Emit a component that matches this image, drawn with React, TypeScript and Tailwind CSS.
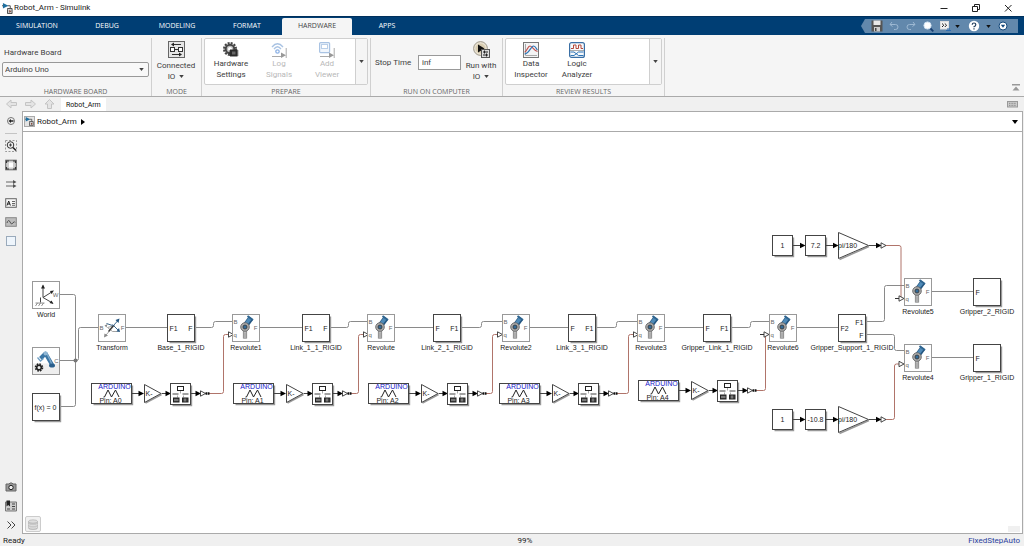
import React from 'react';
import clsx from 'clsx';

const ribbonTabs = ['SIMULATION', 'DEBUG', 'MODELING', 'FORMAT', 'HARDWARE', 'APPS'];

const Caret: React.FC<{ className?: string }> = ({ className = 'w-[5px] h-[3px]' }) => (
  <svg viewBox="0 0 6 4" className={className} aria-hidden="true">
    <path d="M0 0H6L3 4Z" fill="currentColor" />
  </svg>
);

const ModelIcon: React.FC<{ className?: string }> = ({ className }) => (
  <svg viewBox="0 0 12 12" className={className} aria-hidden="true">
    <path d="M0 3H2M6 3H9V6" stroke="#444" fill="none" />
    <path d="M1 0L7 3L1 6Z" fill="#1f6f9f" />
    <path d="M6 7V6H11V11.5H6Z" fill="#ccc" stroke="#444" />
    <path d="M8 7.500L10 9L8 10.500Z" fill="#7b3a2a" />
  </svg>
);

/* ---------- ribbon icons ---------- */

const ConnectedIcon = () => (
  <svg viewBox="0 0 17 17" className="h-[17px] w-[17px]" aria-hidden="true">
    <rect x="0.5" y="0.5" width="16" height="16" fill="#e6e6e6" stroke="#666" />
    <path d="M4 3.5H13M4 13.5H12M2 8.5H15" stroke="#333" strokeWidth="1.2" />
    <path d="M6 1.5L3 3.5L6 5.5ZM11 11.5L14 13.5L11 15.5Z" fill="#222" />
    <rect x="2.5" y="6.5" width="4" height="4" fill="#fff" stroke="#333" />
    <rect x="10.5" y="6.5" width="4" height="4" fill="#fff" stroke="#333" />
  </svg>
);

const HardwareSettingsIcon = () => (
  <svg viewBox="0 0 16 16" className="h-4 w-4" aria-hidden="true">
    <circle cx="7" cy="7" r="6" fill="none" stroke="#444" strokeWidth="2" strokeDasharray="2 1.14" />
    <circle cx="7" cy="7" r="4.3" fill="#bbb" stroke="#444" strokeWidth="2" />
    <circle cx="7" cy="7" r="2" fill="#fff" />
    <rect x="7" y="7.5" width="7.5" height="7" fill="#333" />
    <path d="M6 9H15.5M6 11H15.5M6 13H15.5" stroke="#222" strokeWidth="0.8" />
    <path d="M9 9.5H12.5V12.5H9Z" fill="#666" />
  </svg>
);

const LogSignalsIcon = () => (
  <svg viewBox="0 0 16 16" className="h-4 w-4" fill="none" aria-hidden="true">
    <path d="M1 5Q6.500 -1.500 12 5M3 7Q6.500 2.500 10 7" stroke="#a9c3e3" strokeWidth="1.3" />
    <circle cx="6.500" cy="9.500" r="1.700" stroke="#8db2e6" strokeWidth="1.300" />
    <path d="M1 14.500H11M15.200 6V16" stroke="#aaa" />
    <path d="M10 10.500L15 13.300L10 16Z" fill="#999" />
  </svg>
);

const AddViewerIcon = () => (
  <svg viewBox="0 0 16 16" className="h-4 w-4" fill="none" aria-hidden="true">
    <rect x="0.600" y="0.600" width="10" height="10" rx="1" stroke="#a9c3e3" strokeWidth="1.200" fill="#f1f6fc" />
    <rect x="2.500" y="2.500" width="6" height="4" stroke="#b9cfe9" fill="#fff" />
    <path d="M1 14.500H11M15.200 6V16" stroke="#aaa" />
    <path d="M10 10.500L15 13.300L10 16Z" fill="#999" />
  </svg>
);

const RunIcon = () => (
  <svg viewBox="0 0 17 17" className="h-[17px] w-[17px]" aria-hidden="true">
    <circle cx="7.500" cy="7.500" r="6.900" fill="#e9e2d2" stroke="#a09a8c" />
    <circle cx="7.500" cy="7.500" r="5" fill="#d8ccb0" />
    <path d="M5 3.500L11.500 7.500L5 11.500Z" fill="#111" />
    <rect x="8.500" y="8.500" width="8" height="8" fill="#ddd" stroke="#555" />
    <path d="M10 11H15M10 14H15" stroke="#222" />
    <path d="M11.500 9.500V12.500M13.500 12.500V15.500" stroke="#222" />
  </svg>
);

const DataInspectorIcon = () => (
  <svg viewBox="0 0 16 16" className="h-4 w-4" fill="none" aria-hidden="true">
    <rect x="0.500" y="0.500" width="15" height="15" fill="#f4f4f4" stroke="#777" />
    <path d="M2.500 2V13.500H14" stroke="#aaa" />
    <path d="M1.500 10C4 10 4.500 4 7 4S11 9 14.500 9.500" stroke="#c0504d" strokeWidth="1.200" />
    <path d="M1.500 12C6 12 8 4 10.500 4S13 7 14.500 8" stroke="#2e75b6" strokeWidth="1.200" />
  </svg>
);

const LogicAnalyzerIcon = () => (
  <svg viewBox="0 0 16 16" className="h-4 w-4" fill="none" aria-hidden="true">
    <rect x="0.600" y="0.600" width="14.800" height="14.800" rx="2" fill="#f7f9fb" stroke="#3a6fa5" strokeWidth="1.200" />
    <path d="M2 6.500H4.500V3H7V6.500H9.500V3H12V6.500H14" stroke="#b5483a" />
    <path d="M1 8.500H15" stroke="#777" strokeWidth="0.600" />
    <path d="M1.500 10H5L9.500 13.500H14.500M1.500 13.500H5L9.500 10H14.500" stroke="#2e75b6" />
  </svg>
);

/* ---------- ribbon pieces ---------- */

interface RibbonButtonProps {
  icon: React.ReactNode;
  lines: [string, string];
  disabled?: boolean;
  menu?: boolean;
  className?: string;
}

const RibbonButton: React.FC<RibbonButtonProps> = ({ icon, lines, disabled, menu, className = 'w-12' }) => (
  <button
    type="button"
    disabled={disabled}
    className={clsx('flex flex-col items-center text-[8px] leading-[11px]', disabled ? 'text-[#b8b8b8]' : 'text-[#404040]', className)}
  >
    {icon}
    <span className={menu ? 'mt-[2px]' : ''}>{lines[0]}</span>
    <span className="flex items-center gap-1">
      {lines[1]}
      {menu ? <Caret /> : null}
    </span>
  </button>
);

const Section: React.FC<{ title: string; className?: string; children: React.ReactNode }> = ({ title, className, children }) => (
  <section className={clsx('flex flex-col border-r border-[#d0d0d0]', className)}>
    <div className="flex flex-1">{children}</div>
    <h2 className="text-center font-['Open_Sans',sans-serif] text-[7px] leading-[9px] text-[#666]">{title}</h2>
  </section>
);

const Gallery: React.FC<{ label: string; children: React.ReactNode }> = ({ label, children }) => (
  <div className="mx-0.5 mb-0.5 flex flex-1 rounded-xs border border-[#cfcfcf] bg-white">
    <div className="flex flex-1 pt-[3px] pl-0.5">{children}</div>
    <button type="button" aria-label={label} className="flex w-3 items-center justify-center border-l border-[#cfcfcf] bg-[#f5f5f5] text-[#444]">
      <Caret />
    </button>
  </div>
);

/* ---------- quick access bar ---------- */

const QuickAccess = () => (
  <div className="flex h-[14px] w-[157px] items-center bg-[#6288ac] pr-2 pl-[10px] text-[#111] [clip-path:polygon(4px_0,100%_0,100%_100%,4px_100%,0_50%)]">
    <button type="button" aria-label="Save" className="w-[18px]">
      <svg viewBox="0 0 12 12" className="h-3 w-3">
        <path d="M0.500 0.500H11.500V11.500H0.500Z" fill="#555" />
        <path d="M2.500 0.500H9.500V5H2.500Z" fill="#e8e8e8" />
        <path d="M3 7H9V11.500H3Z" fill="#ccc" />
        <path d="M4 8H5.500V11H4Z" fill="#444" />
      </svg>
    </button>
    <button type="button" aria-label="Undo" className="w-[17px]">
      <svg viewBox="0 0 10 10" className="h-[10px] w-[10px]" fill="none" stroke="#9db8d2">
        <path d="M3 1L1 3.500L3.500 5.500M1 3.500H6.500Q9 3.500 9 6T6.500 8.500H5" />
      </svg>
    </button>
    <button type="button" aria-label="Redo" className="w-[17px]">
      <svg viewBox="0 0 10 10" className="h-[10px] w-[10px]" fill="none" stroke="#9db8d2">
        <path d="M7 1L9 3.500L6.500 5.500M9 3.500H3.500Q1 3.500 1 6T3.500 8.500H5" />
      </svg>
    </button>
    <button type="button" aria-label="Find" className="w-[17px]">
      <svg viewBox="0 0 11 11" className="h-[11px] w-[11px]">
        <path d="M6.500 6.500L10.300 10.300" stroke="#173f73" strokeWidth="1.800" />
        <circle cx="4.500" cy="4.500" r="3.600" fill="#fff" stroke="#cfe0f0" />
      </svg>
    </button>
    <button type="button" aria-label="Shortcuts" className="flex w-7 items-center gap-1">
      <svg viewBox="0 0 11 11" className="h-[11px] w-[11px]" fill="none">
        <rect x="0.500" y="0.500" width="8" height="7.500" fill="#f1f1f1" stroke="#ddd" />
        <path d="M2 2.500L3.800 4.200L2 6M4.800 2.500L6.600 4.200L4.800 6" stroke="#222" />
        <path d="M6 9.500H11M7 8H10" stroke="#2d6db0" strokeWidth="1.200" />
      </svg>
      <Caret />
    </button>
    <button type="button" aria-label="Help" className="flex w-[30px] items-center gap-[6px]">
      <svg viewBox="0 0 12 12" className="h-3 w-3" fill="none">
        <circle cx="6" cy="6" r="5.200" fill="#fff" />
        <path d="M4.200 4.700Q4.200 3 6 3T7.800 4.600T6 6.800V7.300" stroke="#24405e" strokeWidth="1.200" />
        <path d="M6 8.200V9.400" stroke="#24405e" strokeWidth="1.200" />
      </svg>
      <Caret />
    </button>
    <button type="button" aria-label="Minimize toolstrip">
      <svg viewBox="0 0 10 10" className="h-[10px] w-[10px]">
        <circle cx="5" cy="5" r="4" fill="#fff" stroke="#14497c" />
        <path d="M2.800 3.800H7.200L5 6.800Z" fill="#14497c" />
      </svg>
    </button>
  </div>
);

/* ---------- palette (left side) ---------- */

const paletteTools: { label: string; icon: React.ReactNode }[] = [
  {
    label: 'Zoom',
    icon: (
      <>
        <path d="M0.500 0.500H11.500V11.500H0.500Z" stroke="#999" strokeDasharray="2 1.500" />
        <circle cx="5.500" cy="5" r="3.300" stroke="#333" />
        <path d="M4 5H7M5.500 3.500V6.500" stroke="#333" strokeWidth="0.900" />
        <path d="M8 7.500L11 10.500" stroke="#222" strokeWidth="1.600" />
      </>
    ),
  },
  {
    label: 'Fit to view',
    icon: (
      <>
        <rect x="0.700" y="1.200" width="10.600" height="9.600" fill="#ccc" stroke="#666" />
        <path d="M4 3.500H8V8.500H4Z" fill="#fff" />
        <path d="M1.500 4V2H4M8 2H10.500V4M10.500 8V10H8M4 10H1.500V8" stroke="#333" strokeWidth="1.200" />
      </>
    ),
  },
  {
    label: 'Sample time',
    icon: (
      <>
        <path d="M1 4H8.500M1 8H8.500" stroke="#666" strokeWidth="1.200" />
        <path d="M8 2L11.500 4L8 6ZM8 6L11.500 8L8 10Z" fill="#555" />
      </>
    ),
  },
  {
    label: 'Annotation',
    icon: (
      <>
        <rect x="0.700" y="1.700" width="10.600" height="8.600" fill="#f6f6f6" stroke="#666" />
        <path d="M2 8.500L3.700 4L5.400 8.500M2.600 7H4.800" stroke="#222" />
        <path d="M7 4.500H10M7 6.500H10M7 8.300H10" stroke="#555" strokeWidth="0.900" />
      </>
    ),
  },
  {
    label: 'Image',
    icon: (
      <>
        <rect x="0.700" y="1.700" width="10.600" height="8.600" fill="#bdbdbd" stroke="#888" />
        <path d="M2 7Q3.500 2.500 5 6T8 7T10 6.500" stroke="#555" />
      </>
    ),
  },
  {
    label: 'Area',
    icon: <rect x="1.500" y="1.500" width="9" height="9" fill="#eef5fc" stroke="#9aaabb" />,
  },
];

const PaletteButton: React.FC<{ label: string; children: React.ReactNode }> = ({ label, children }) => (
  <button type="button" aria-label={label} className="flex h-[14px] w-full items-center justify-center">
    <svg viewBox="0 0 12 12" className="h-3 w-3" fill="none">
      {children}
    </svg>
  </button>
);

const Palette = () => (
  <nav aria-label="Palette" className="flex w-[22px] flex-col items-center gap-[5px] bg-[#f0f0f0] pt-[3px] pb-[2px]">
    <PaletteButton label="Hide explorer bar">
      <circle cx="6" cy="6" r="3.500" stroke="#777" />
      <path d="M3.500 6L6 4V8ZM6 5.300H8.500V6.700H6Z" fill="#222" />
    </PaletteButton>
    <hr className="w-3 border-[#c4c4c4]" />
    {paletteTools.map((tool) => (
      <PaletteButton key={tool.label} label={tool.label}>
        {tool.icon}
      </PaletteButton>
    ))}
    <div className="flex-1" />
    <PaletteButton label="Screenshot">
      <path d="M1 3H4L5 2H7L8 3H11V10H1Z" fill="#999" stroke="#666" />
      <circle cx="6" cy="6.500" r="2.200" fill="#eee" stroke="#222" />
    </PaletteButton>
    <PaletteButton label="Library">
      <path d="M0.500 2H11.500V11H0.500Z" fill="#ccc" stroke="#777" />
      <path d="M1.500 0.500H5V6.500L3.200 5L1.500 6.500Z" fill="#222" />
      <path d="M7 4H10M7 6.500H10M2 9H5M7 9H10" stroke="#444" />
    </PaletteButton>
    <PaletteButton label="More">
      <path d="M2.500 2.500L6 6L2.500 9.500M6.500 2.500L10 6L6.500 9.500" stroke="#444" />
    </PaletteButton>
  </nav>
);

/* ---------- block diagram ---------- */

const WIRE = '#8a8a8a';
const SIGNAL = '#b0746a';

interface BlockProps {
  x: number;
  y: number;
  label?: string;
  dark?: boolean;
  w?: number;
  h?: number;
  children?: React.ReactNode;
}

const Block: React.FC<BlockProps> = ({ x, y, label, dark, w = 27, h = 27, children }) => (
  <g transform={`translate(${x} ${y})`}>
    {dark ? <path d={`M2 ${h + 1}H${w + 1}V2`} fill="none" stroke="#999" strokeWidth="1.400" /> : null}
    <rect width={w} height={h} fill="#fff" stroke={dark ? '#444' : '#999'} />
    {children}
    {label ? (
      <text x={w / 2} y={h + 8} textAnchor="middle" fill="#222">
        {label}
      </text>
    ) : null}
  </g>
);

const Port: React.FC<{ x: number; y: number; name: string; end?: boolean; dim?: boolean }> = ({ x, y, name, end, dim }) => (
  <text x={x} y={y} textAnchor={end ? 'end' : 'start'} fontSize={dim ? 6 : 7} fill={dim ? '#666' : '#222'}>
    {name}
  </text>
);

const Revolute: React.FC<{ x: number; y: number; label: string }> = ({ x, y, label }) => (
  <Block x={x} y={y} label={label}>
    <path d="M13 11L18.500 3.500" stroke="#24557f" strokeWidth="5.500" />
    <path d="M13 10L18 3.500" stroke="#4f8ab8" strokeWidth="3.500" />
    <path d="M15 1.500L20.500 5.500" stroke="#2f6590" strokeWidth="2" />
    <path d="M12.500 14V24" stroke="#777" strokeWidth="4.200" />
    <path d="M12.500 14V23.500" stroke="#c4c4c4" strokeWidth="2.800" />
    <circle cx="12.500" cy="12.500" r="4.300" fill="#aaa" stroke="#666" strokeWidth="0.900" />
    <circle cx="12.500" cy="12.500" r="2" fill="#336b98" stroke="#333" strokeWidth="0.800" />
    <path d="M12.500 18V24" stroke="#888" strokeWidth="0.700" />
    <Port x={1} y={9} name="B" dim />
    <Port x={1} y={22} name="q" dim />
    <Port x={25} y={15} name="F" end dim />
  </Block>
);

interface BodyProps {
  x: number;
  y: number;
  label: string;
  left: string;
  right?: string;
}

const Body: React.FC<BodyProps> = ({ x, y, label, left, right }) => (
  <Block x={x} y={y} label={label} dark>
    <Port x={2} y={16} name={left} />
    {right ? <Port x={25} y={16} name={right} end /> : null}
  </Block>
);

const Arrow: React.FC<{ x: number; y: number; from: number }> = ({ x, y, from }) => (
  <g>
    <path d={`M${from} ${y}H${x - 3}`} stroke="#444" />
    <path d={`M${x - 5} ${y - 2.8}L${x + 0.5} ${y}L${x - 5} ${y + 2.8}Z`} fill="#000" />
  </g>
);

const OpenArrow: React.FC<{ x: number; y: number }> = ({ x, y }) => (
  <path d={`M${x} ${y - 2.7}L${x + 5} ${y}L${x} ${y + 2.7}Z`} fill="#fff" stroke="#333" strokeWidth="0.900" />
);

interface ArduinoChainProps {
  x: number;
  y: number;
  pin: string;
  turn: number;
}

/* analog input -> gain -> subsystem -> joint input */
const ArduinoChain: React.FC<ArduinoChainProps> = ({ x, y, pin, turn }) => {
  const mid = y + 10;
  return (
    <g>
      <path d={`M${x + 117} ${mid}H${turn - 2}Q${turn} ${mid} ${turn} ${mid - 2}V336.500Q${turn} 334.500 ${turn + 2} 334.500H${turn + 5}`} fill="none" stroke={SIGNAL} />
      <Block x={x} y={y} w={40} h={20} dark>
        <text x="23" y="5" textAnchor="middle" fill="#1717c8">
          ARDUINO
        </text>
        <path d="M12 13.500H13L16.500 6.500L20 13.500L24 6.500L27.500 13.500" fill="none" stroke="#222" />
        <text x="19" y="19.500" textAnchor="middle" fill="#222">
          Pin: {pin}
        </text>
      </Block>
      <Arrow from={x + 40} x={x + 52} y={mid} />
      <path d={`M${x + 54} ${y + 19.5}L${x + 70} ${mid + 1}`} stroke="#999" strokeWidth="1.500" />
      <path d={`M${x + 53} ${y + 1}L${x + 69.5} ${mid}L${x + 53} ${y + 19}Z`} fill="#fff" stroke="#444" />
      <text x={x + 54} y={mid + 2.5} fill="#222">
        K-
      </text>
      <Arrow from={x + 70} x={x + 79} y={mid} />
      <Block x={x + 79} y={y} w={20} h={21} dark>
        <rect x="7" y="3" width="6" height="4" fill="#fff" stroke="#222" />
        <path d="M2 10.500H8M12 10.500H18" stroke="#444" />
        <path d="M10 7.500V10M7 12V14M13 12V14" stroke="#aaa" />
        <rect x="3" y="14.500" width="5.500" height="4" fill="#444" stroke="#222" />
        <rect x="12" y="14.500" width="5.500" height="4" fill="#444" stroke="#222" />
        <path d="M3.500 16.500H8M14.500 15V18" stroke="#ddd" strokeWidth="0.700" />
      </Block>
      <Arrow from={x + 99} x={x + 109} y={mid} />
      <OpenArrow x={x + 109} y={mid} />
      <path d={`M${x + 114} ${mid}H${x + 118}`} stroke="#111" strokeWidth="2.400" strokeDasharray="2 0.500" />
      <OpenArrow x={turn + 5} y={334.5} />
    </g>
  );
};

const ConstantChain: React.FC<{ y: number; value: string }> = ({ y, value }) => {
  const mid = y + 10;
  return (
    <g>
      <Block x={772.5} y={y} w={20} h={20} dark>
        <text x="10" y="12.500" textAnchor="middle" fill="#222">1</text>
      </Block>
      <Arrow from={793} x={805} y={mid} />
      <Block x={805.5} y={y} w={20} h={20} dark>
        <text x="10" y="12.500" textAnchor="middle" fill="#222">{value}</text>
      </Block>
      <Arrow from={826} x={838} y={mid} />
      <path d={`M839.500 ${y + 24}L869 ${mid + 1}`} stroke="#999" strokeWidth="1.500" />
      <path d={`M838.500 ${mid - 13}L868.500 ${mid}L838.500 ${mid + 13}Z`} fill="#fff" stroke="#444" />
      <text x="838" y={mid + 2.5} fill="#222">pi/180</text>
      <Arrow from={869} x={881} y={mid} />
      <OpenArrow x={881} y={mid} />
    </g>
  );
};

const revolutes = [
  { x: 232.5, y: 314.5, label: 'Revolute1' },
  { x: 367.5, y: 314.5, label: 'Revolute' },
  { x: 502.5, y: 314.5, label: 'Revolute2' },
  { x: 637.5, y: 314.5, label: 'Revolute3' },
  { x: 769.5, y: 314.5, label: 'Revolute6' },
  { x: 904.5, y: 278.5, label: 'Revolute5' },
  { x: 904.5, y: 344.5, label: 'Revolute4' },
];

const bodies: BodyProps[] = [
  { x: 167.5, y: 314.5, label: 'Base_1_RIGID', left: 'F1', right: 'F' },
  { x: 302.5, y: 314.5, label: 'Link_1_1_RIGID', left: 'F1', right: 'F' },
  { x: 433.5, y: 314.5, label: 'Link_2_1_RIGID', left: 'F', right: 'F1' },
  { x: 568.5, y: 314.5, label: 'Link_3_1_RIGID', left: 'F', right: 'F1' },
  { x: 703.5, y: 314.5, label: 'Gripper_Link_1_RIGID', left: 'F', right: 'F1' },
  { x: 973.5, y: 278.5, label: 'Gripper_2_RIGID', left: 'F' },
  { x: 973.5, y: 344.5, label: 'Gripper_1_RIGID', left: 'F' },
];

const chains: ArduinoChainProps[] = [
  { x: 91.5, y: 383.5, pin: 'A0', turn: 223.5 },
  { x: 233.5, y: 383.5, pin: 'A1', turn: 358.5 },
  { x: 368.5, y: 383.5, pin: 'A2', turn: 492.5 },
  { x: 499.5, y: 383.5, pin: 'A3', turn: 628.5 },
  { x: 638.5, y: 380.5, pin: 'A4', turn: 765.5 },
];

const wires = [
  'M59 294.500H73.500Q75.500 294.500 75.500 296.500V404.500Q75.500 406.500 73.500 406.500H59',
  'M59 360.500H76.500Q78.500 360.500 78.500 358.500V329.500Q78.500 327.500 80.500 327.500H98',
  'M125 327.500H167',
  'M194 327.500H211.500Q213.500 327.500 213.500 325.500V323.500Q213.500 321.500 215.500 321.500H232',
  'M259 327.500H302',
  'M329 327.500H346.500Q348.500 327.500 348.500 325.500V323.500Q348.500 321.500 350.500 321.500H367',
  'M394 327.500H433',
  'M461 327.500H479.500Q481.500 327.500 481.500 325.500V323.500Q481.500 321.500 483.500 321.500H502',
  'M529 327.500H568',
  'M595 327.500H614.500Q616.500 327.500 616.500 325.500V323.500Q616.500 321.500 618.500 321.500H637',
  'M664 327.500H703',
  'M731 327.500H748.500Q750.500 327.500 750.500 325.500V323.500Q750.500 321.500 752.500 321.500H769',
  'M796 327.500H838',
  'M866 321.500H882.500Q884.500 321.500 884.500 319.500V287.500Q884.500 285.500 886.500 285.500H904',
  'M866 334.500H892.500Q894.500 334.500 894.500 336.500V348.500Q894.500 350.500 896.500 350.500H904',
  'M931 291.500H973',
  'M931 357.500H973',
];

const Diagram = () => (
  <svg className="block h-full w-full font-['Liberation_Sans',sans-serif] text-[7px]" role="img" aria-label="Robot_Arm block diagram">
    <g transform="translate(-23 -132)">
      {wires.map((d) => (
        <path key={d} d={d} fill="none" stroke={WIRE} />
      ))}
      <circle cx="75.500" cy="360.500" r="2" fill="#777" />

      <Block x={32.5} y={281.5} label="World">
        <path d="M10.500 16V4M10.500 16L20 10M10.500 16L20 21.500M8 16V21" fill="none" stroke="#444" />
        <path d="M8.500 7L10.500 3L12.500 7ZM17.500 9.500L21.500 9L19 12.500ZM19 19L21 22.500L17 21.500Z" fill="#222" />
        <path d="M3 21.500H12M5 21.500L3 24.500M8 21.500L6 24.500M11 21.500L9 24.500" stroke="#777" strokeWidth="0.800" />
        <Port x={26} y={15} name="W" end dim />
      </Block>

      <Block x={32.5} y={347.5}>
        <rect x="0.500" y="16" width="26" height="10.500" fill="#eee" />
        <path d="M8 11L13 6L20 18" fill="none" stroke="#3c76a5" strokeWidth="4" strokeLinejoin="round" />
        <path d="M14 5L20 18" stroke="#7faacb" strokeWidth="1.300" />
        <circle cx="13" cy="6" r="2" fill="#8fb6d4" />
        <path d="M5 10L8 13.500L11 11" fill="none" stroke="#6f9fc4" strokeWidth="1.300" />
        <ellipse cx="19.500" cy="18" rx="3" ry="2" fill="#2a5f8c" />
        <circle cx="6.500" cy="20" r="3.300" fill="none" stroke="#222" strokeWidth="2" strokeDasharray="1.500 1.090" />
        <circle cx="6.500" cy="20" r="2.300" fill="none" stroke="#222" strokeWidth="1.600" />
        <Port x={26} y={15} name="C" end dim />
      </Block>

      <Block x={32.5} y={393.5} dark>
        <text x="13" y="16" textAnchor="middle" fill="#222">f(x) = 0</text>
      </Block>

      <Block x={98.5} y={314.5} label="Transform">
        <path d="M7 21L16 11M16 11L9 13L14 17H19" fill="none" stroke="#999" strokeWidth="0.900" />
        <path d="M10 17L15 11" stroke="#333" strokeWidth="1.200" />
        <path d="M15 11L19 6.500M14 10L20 16M14 11L8 9" fill="none" stroke="#24557f" strokeWidth="0.900" />
        <path d="M17 5.500L21 4L20 8.500ZM18 17L21.500 17.500L20.500 13.500Z" fill="#24557f" />
        <path d="M6 19L5.500 23L9.500 21ZM6 11L9 9.500L8 13Z" fill="#888" />
        <Port x={1} y={15} name="B" dim />
        <Port x={26} y={15} name="F" end dim />
      </Block>

      {chains.map((chain) => (
        <ArduinoChain key={chain.pin} {...chain} />
      ))}

      <path d="M886 245.500H899Q901 245.500 901 247.500V298.500" fill="none" stroke={SIGNAL} />
      <path d="M886 419.500H892.500Q894.500 419.500 894.500 417.500V366Q894.500 364 896.500 364H899" fill="none" stroke={SIGNAL} />
      <path d="M895 298.500H899M760 334.500H765" stroke="#333" />
      <OpenArrow x={899} y={298.5} />
      <OpenArrow x={899} y={364} />
      <OpenArrow x={764} y={334.5} />
      <ConstantChain y={235.5} value="7.2" />
      <ConstantChain y={409.5} value="-10.8" />

      {bodies.map((body) => (
        <Body key={body.label} {...body} />
      ))}
      <Block x={838.5} y={314.5} label="Gripper_Support_1_RIGID" dark>
        <Port x={2} y={16} name="F2" />
        <Port x={25} y={10} name="F1" end />
        <Port x={25} y={23} name="F" end />
      </Block>
      {revolutes.map((joint) => (
        <Revolute key={joint.label} {...joint} />
      ))}
    </g>
  </svg>
);

/* ---------- window ---------- */

const TitleBar = () => (
  <header className="flex h-4 items-center bg-white pr-3 pl-0.5">
    <ModelIcon className="h-[11px] w-[11px]" />
    <h1 className="ml-px flex-1 text-[8px] text-[#222]">Robot_Arm - Simulink</h1>
    <div className="flex gap-[24px] text-[#222]">
      <button type="button" aria-label="Minimize">
        <svg viewBox="0 0 8 8" className="h-2 w-2"><path d="M0.500 4.500H7.500" stroke="currentColor" /></svg>
      </button>
      <button type="button" aria-label="Restore">
        <svg viewBox="0 0 8 8" className="h-2 w-2" fill="none" stroke="currentColor"><path d="M0.500 2.500H5.500V7.500H0.500ZM2.500 2.500V0.500H7.500V5.500H5.500" /></svg>
      </button>
      <button type="button" aria-label="Close">
        <svg viewBox="0 0 8 8" className="h-2 w-2" stroke="currentColor"><path d="M1 1L7.500 7.500M7.500 1L1 7.500" /></svg>
      </button>
    </div>
  </header>
);

const TabBar = () => (
  <div className="flex h-[19px] items-stretch border-t border-[#00305c] bg-[#003e74] pr-[6px] pl-0.5">
    <div role="tablist" className="flex flex-1 pt-px font-['Open_Sans',sans-serif]">
      {ribbonTabs.map((tab) => (
        <button
          key={tab}
          type="button"
          role="tab"
          aria-selected={tab === 'HARDWARE'}
          className={clsx('w-[70px] text-[7px]', tab === 'HARDWARE' ? 'rounded-t-xs bg-[#f5f5f5] text-[#444]' : 'text-white')}
        >
          {tab}
        </button>
      ))}
    </div>
    <div className="flex items-center">
      <QuickAccess />
    </div>
  </div>
);

const Ribbon = () => (
  <div className="flex h-[62px] items-stretch border-b border-[#aaa] bg-[#f5f5f5] pt-[3px] text-[#404040]">
    <Section title="HARDWARE BOARD" className="w-[152px]">
      <div className="flex flex-1 flex-col px-0.5 pt-[9px]">
        <label htmlFor="board" className="pl-0.5 text-[8px] leading-[12px]">Hardware Board</label>
        <div className="relative mt-[3px] flex">
          <select id="board" className="h-[15px] w-full appearance-none rounded-xs border border-[#999] bg-[#f8f8f8] pl-0.5 text-[8px] leading-[12px]">
            <option>Arduino Uno</option>
          </select>
          <Caret className="pointer-events-none absolute top-[6px] right-[5px] h-[3px] w-[5px]" />
        </div>
      </div>
    </Section>
    <Section title="MODE" className="w-[50px]">
      <RibbonButton icon={<ConnectedIcon />} lines={['Connected', 'IO']} menu className="w-12 pt-[3px]" />
    </Section>
    <Section title="PREPARE" className="w-[169px]">
      <Gallery label="More prepare tools">
        <RibbonButton icon={<HardwareSettingsIcon />} lines={['Hardware', 'Settings']} />
        <RibbonButton icon={<LogSignalsIcon />} lines={['Log', 'Signals']} disabled />
        <RibbonButton icon={<AddViewerIcon />} lines={['Add', 'Viewer']} disabled />
      </Gallery>
    </Section>
    <Section title="RUN ON COMPUTER" className="w-[132px]">
      <div className="flex flex-1 items-center pl-1">
        <label htmlFor="stop" className="w-[43px] text-[8px]">Stop Time</label>
        <input id="stop" defaultValue="inf" className="h-[15px] w-[43px] border border-[#999] bg-white px-[3px] text-[8px]" />
        <RibbonButton icon={<RunIcon />} lines={['Run with', 'IO']} menu className="w-10 self-start pt-[3px]" />
      </div>
    </Section>
    <Section title="REVIEW RESULTS" className="w-[162px]">
      <Gallery label="More review tools">
        <RibbonButton icon={<DataInspectorIcon />} lines={['Data', 'Inspector']} className="w-[46px]" />
        <RibbonButton icon={<LogicAnalyzerIcon />} lines={['Logic', 'Analyzer']} className="w-[46px]" />
      </Gallery>
    </Section>
    <div className="flex flex-1 items-end justify-end p-1">
      <button type="button" aria-label="Collapse toolstrip">
        <svg viewBox="0 0 8 8" className="h-2 w-2" fill="#999"><path d="M0 0H8V1.500H0ZM4 2.500L7.500 6.500H0.500Z" /></svg>
      </button>
    </div>
  </div>
);

const NavArrow: React.FC<{ label: string; d: string }> = ({ label, d }) => (
  <button type="button" aria-label={label} disabled>
    <svg viewBox="0 0 11 10" className="h-[10px] w-[11px]" fill="#e4e4e4" stroke="#c4c4c4"><path d={d} /></svg>
  </button>
);

const DocumentBar = () => (
  <div className="flex h-[14px] items-stretch bg-[#f0f0f0] pr-[6px] pl-[6px]">
    <div className="flex w-[55px] items-center gap-[8px]">
      <NavArrow label="Back" d="M0.500 5L5 1V3.500H10.500V6.500H5V9Z" />
      <NavArrow label="Forward" d="M10.500 5L6 1V3.500H0.500V6.500H6V9Z" />
      <NavArrow label="Up" d="M5.500 0.500L10 5H7.500V9.500H3.500V5H1Z" />
    </div>
    <button type="button" className="mt-px bg-white px-[5px] text-[7px] leading-[12px] text-[#111]">Robot_Arm</button>
    <button type="button" aria-label="Keyboard" className="ml-auto">
      <svg viewBox="0 0 11 7" className="h-[7px] w-[11px]" fill="none">
        <rect x="0.500" y="0.500" width="10" height="5.500" fill="#ccc" stroke="#999" />
        <path d="M2 2.300H9M2 4.300H9" stroke="#888" strokeDasharray="1 0.600" />
      </svg>
    </button>
  </div>
);

export default function App() {
  return (
    <div className="flex h-screen flex-col overflow-hidden bg-[#f0f0f0] font-[Roboto,sans-serif] text-[#222]">
      <TitleBar />
      <TabBar />
      <Ribbon />
      <DocumentBar />
      <div className="flex min-h-0 flex-1 pr-px">
        <Palette />
        <main className="flex min-w-0 flex-1 flex-col border border-[#aaa]">
          <div className="flex h-5 items-center border-b border-[#aaa] bg-white pr-1 pl-px">
            <span className="flex h-[11px] w-[11px] items-center justify-center border border-[#aaa] bg-[#e4e4e4]">
              <ModelIcon className="h-[9px] w-[9px]" />
            </span>
            <a href="#model" className="ml-0.5 text-[8px]">Robot_Arm</a>
            <svg viewBox="0 0 4 6" className="ml-1 h-[6px] w-1"><path d="M0 0L4 3L0 6Z" /></svg>
            <button type="button" aria-label="Model hierarchy" className="ml-auto text-black">
              <Caret className="h-1 w-[6px]" />
            </button>
          </div>
          <div className="relative min-h-0 flex-1 overflow-hidden bg-white">
            <Diagram />
            <button type="button" aria-label="Model data" className="absolute bottom-px left-0.5 flex h-4 w-4 items-center justify-center rounded-xs border border-[#ccc] bg-[#f0f0f0]">
              <svg viewBox="0 0 10 11" className="h-[11px] w-[10px]" fill="#c8c8c8" stroke="#aaa" strokeWidth="0.600">
                <path d="M0.500 2.500V9C0.500 11 9.500 11 9.500 9V2.500" />
                <path d="M0.500 5.500C2 7 8 7 9.500 5.500M0.500 8C2 9.500 8 9.500 9.500 8" fill="none" stroke="#eee" />
                <ellipse cx="5" cy="2.500" rx="4.500" ry="1.700" fill="#ddd" />
              </svg>
            </button>
            <div className="absolute right-0.5 bottom-px h-[6px] w-3 bg-[#f0f0f0]" />
          </div>
        </main>
      </div>
      <footer className="flex h-3 pr-1 pl-[3px] text-[8px] leading-[14px]">
        <span className="w-1/2">Ready</span>
        <span className="pl-[6px]">99%</span>
        <a href="#solver" className="ml-auto text-[#2a3f9d]">FixedStepAuto</a>
      </footer>
    </div>
  );
}
